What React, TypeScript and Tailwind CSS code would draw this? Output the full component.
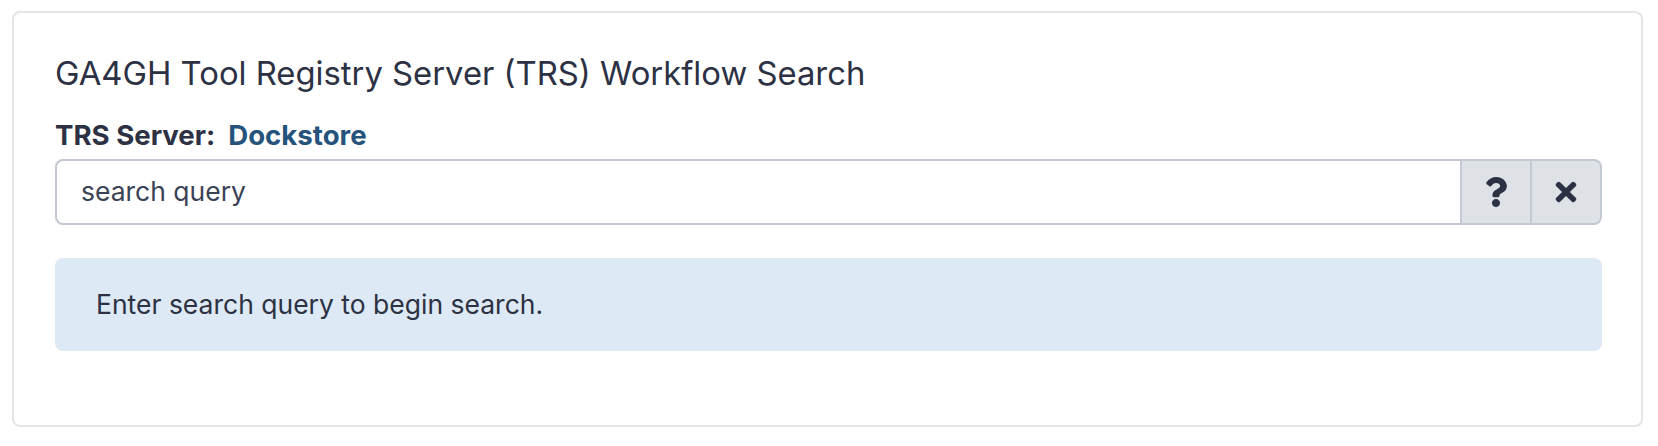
import { FaQuestion, FaTimes } from 'react-icons/fa';

export default function App() {
  return (
    <div className="min-h-[446px] bg-white pl-3 pr-[15px] pt-[11px] font-['Inter',sans-serif] text-[#2c3143]">
      <div className="rounded-[8px] border-2 border-[#e3e5e8] pl-[41px] pr-[39px] pt-[40px] pb-[74px]">
        <h5 className="mb-[21px] text-[32.8px] font-normal leading-[41px]">
          GA4GH Tool Registry Server (TRS) Workflow Search
        </h5>

        <div className="mb-[4px] flex items-center text-[27.6px] font-bold leading-[40px]">
          <span>TRS Server:</span>
          <a href="#" className="ml-[13px] text-[#25537b]">Dockstore</a>
        </div>

        <div className="flex h-[66px]">
          <input
            type="text"
            placeholder="search query"
            className="min-w-0 flex-1 rounded-l-[8px] border-2 border-r-0 border-[#c3c9d3] bg-white px-[24px] text-[26.5px] text-[#2c3143] placeholder:text-[#3a4256] outline-none"
          />
          <button className="flex w-[72px] items-center justify-center border-2 border-[#c3c9d3] bg-[#dee1e6] text-[#2c3143]">
            <FaQuestion size={30} />
          </button>
          <button className="flex w-[70px] items-center justify-center rounded-r-[8px] border-2 border-l-0 border-[#c3c9d3] bg-[#dee1e6] text-[#2c3143]">
            <FaTimes size={30} />
          </button>
        </div>

        <div className="mt-[33px] flex h-[93px] items-center rounded-[8px] bg-[#dde9f5] px-[41px] text-[26.5px]">
          Enter search query to begin search.
        </div>
      </div>
    </div>
  );
}
